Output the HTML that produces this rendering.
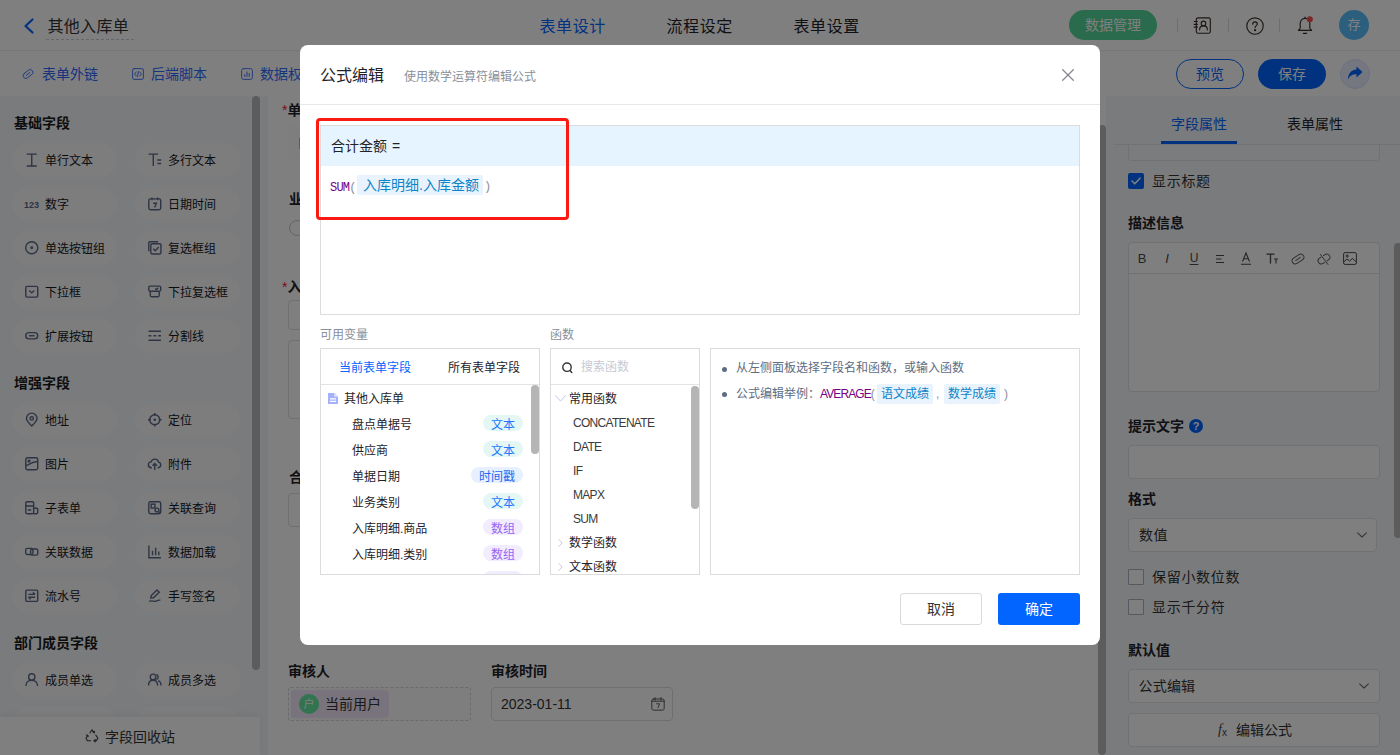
<!DOCTYPE html>
<html lang="zh-CN">
<head>
<meta charset="utf-8">
<title>公式编辑</title>
<style>
*{box-sizing:border-box;margin:0;padding:0}
html,body{width:1400px;height:755px;overflow:hidden;background:#fff}
body{font-family:"Liberation Sans","Noto Sans CJK SC",sans-serif;color:#1f2329;font-size:14px;position:relative}
.a{position:absolute}
.t{position:absolute;white-space:nowrap;height:20px;line-height:20px}
.b{font-weight:bold}
svg{position:absolute;overflow:visible}
.pill{position:absolute;width:105px;height:34px;border-radius:17px;background:#fafbfd}
.pill span{position:absolute;left:33px;top:8px;height:20px;line-height:20px;font-size:12px;color:#15181d;white-space:nowrap}
.pill svg{left:13px;top:10.250px;width:13.500px;height:13.500px;fill:none;stroke:#5c6986;stroke-width:1.25}
.sec{position:absolute;left:14px;font-size:14px;font-weight:bold;height:20px;line-height:20px;color:#1a1a1a}
.inp{position:absolute;border:1px solid #dcdfe6;border-radius:4px;background:#fff}
.lab{position:absolute;font-size:14px;font-weight:bold;height:20px;line-height:20px;color:#1f2329;white-space:nowrap}
.tag{position:absolute;height:16px;line-height:21px;border-radius:8px;font-size:12px;text-align:center;white-space:nowrap}
.it{position:absolute;font-size:12px;height:20px;line-height:20px;white-space:nowrap;color:#1f2329}
</style>
</head>
<body>
<!-- ================= PAGE (under overlay) ================= -->
<div id="page" class="a" style="left:0;top:0;width:1400px;height:755px;background:#fff">

<!-- header -->
<div id="hdr" class="a" style="left:0;top:0;width:1400px;height:51px;background:#fff;border-bottom:1px solid #efefef">
<svg style="left:22.500px;top:17.500px;width:11px;height:16px" viewBox="0 0 11 16"><path d="M9.5 1.5L2.5 8l7 6.5" fill="none" stroke="#0265ff" stroke-width="2.2" stroke-linecap="round" stroke-linejoin="round"/></svg>
<div class="t" style="left:47.500px;top:14.500px;height:24px;line-height:24px;font-size:16px;letter-spacing:.3px;color:#333">其他入库单</div>
<div class="a" style="left:46px;top:39px;width:88px;height:0;border-top:1px dashed #c9cdd4"></div>
<div class="t" style="left:539.5px;top:14.5px;height:24px;line-height:24px;font-size:16px;letter-spacing:.6px;color:#0265ff">表单设计</div>
<div class="t" style="left:666.5px;top:14.5px;height:24px;line-height:24px;font-size:16px;letter-spacing:.6px;color:#1f2329">流程设定</div>
<div class="t" style="left:793.5px;top:14.5px;height:24px;line-height:24px;font-size:16px;letter-spacing:.6px;color:#1f2329">表单设置</div>
<div class="a" style="left:1069px;top:10px;width:88px;height:30px;border-radius:15px;background:#52d698;color:#fff;font-size:14px;line-height:30px;text-align:center">数据管理</div>
<div class="a" style="left:1177px;top:18px;width:1px;height:14px;background:#dcdcdc"></div>
<div class="a" style="left:1228px;top:18px;width:1px;height:14px;background:#dcdcdc"></div>
<div class="a" style="left:1279px;top:18px;width:1px;height:14px;background:#dcdcdc"></div>
<svg style="left:1193px;top:17px;width:19px;height:17px" viewBox="0 0 19 17" fill="none" stroke="#3a2e28" stroke-width="1.150" stroke-linecap="round"><rect x="3.300" y=".8" width="14" height="15.400" rx="1.800"/><path d="M1.200 4.500h3.200M1.200 7.300h3.200M1.200 10.100h3.200"/><circle cx="10.500" cy="6.400" r="2.300"/><path d="M6.600 12.800c0-2.500 1.700-3.900 3.900-3.900s3.900 1.400 3.900 3.900"/></svg>
<svg style="left:1246px;top:16.500px;width:18px;height:18px" viewBox="0 0 18 18" fill="none" stroke="#3a2e28" stroke-width="1.150" stroke-linecap="round"><circle cx="9" cy="9" r="8.200"/><path d="M6.700 7.200c0-1.500 1-2.400 2.300-2.400s2.300.9 2.300 2.100c0 1.600-2.200 1.900-2.200 3.700"/><circle cx="9.100" cy="13.200" r=".55" fill="#3a2e28"/></svg>
<svg style="left:1297px;top:15.500px;width:16px;height:19px" viewBox="0 0 16 19" fill="none" stroke="#3a2e28" stroke-width="1.150" stroke-linecap="round" stroke-linejoin="round"><path d="M3.200 12V7.600C3.200 4.600 5.300 2.300 8 2.300s4.800 2.300 4.800 5.300V12c0 1 .8 1.600 1.800 2.300H1.400C2.400 13.600 3.200 13 3.200 12z"/><path d="M6.300 17.300h3.400M8 1v1.200"/><circle cx="12.800" cy="3.200" r="3" fill="#fa4a4f" stroke="none"/></svg>
<div class="a" style="left:1339px;top:10px;width:30px;height:30px;border-radius:15px;background:#58bdfb;color:#fff;font-size:13px;line-height:30px;text-align:center">存</div>
</div>
<!-- toolbar -->
<div id="tbar" class="a" style="left:0;top:50px;width:1400px;height:46px;background:transparent">
<svg style="left:22px;top:18px;width:12px;height:12px" viewBox="0 0 12 12" fill="none" stroke="#3d74ff" stroke-width=".9" stroke-linecap="round"><g transform="rotate(-38 6 6)"><rect x=".5" y="3.300" width="11" height="5.400" rx="2.700"/><path d="M3.600 6h4.800"/></g></svg>
<div class="t" style="left:42px;top:14px;font-size:14px;color:#2f6bff">表单外链</div>
<svg style="left:132px;top:18px;width:12px;height:12px" viewBox="0 0 12 12" fill="none" stroke="#3d74ff" stroke-width=".95" stroke-linecap="round" stroke-linejoin="round"><rect x=".6" y=".6" width="10.800" height="10.800" rx="1.500"/><path d="M4.300 4L2.500 6l1.800 2M7.700 4l1.800 2-1.800 2M6.600 3.600L5.400 8.400"/></svg>
<div class="t" style="left:151px;top:14px;font-size:14px;color:#2f6bff">后端脚本</div>
<svg style="left:241px;top:18px;width:12px;height:12px" viewBox="0 0 12 12" fill="none" stroke="#3d74ff" stroke-width=".95" stroke-linecap="round"><rect x=".6" y=".6" width="10.800" height="10.800" rx="2"/><path d="M3.800 8.500V6.500M6 8.500V4M8.200 8.500V5.500"/></svg>
<div class="t" style="left:260px;top:14px;font-size:14px;color:#2f6bff">数据权限</div>
<div class="a" style="left:1176px;top:9px;width:68px;height:30px;border-radius:15px;border:1px solid #0265ff;color:#0265ff;font-size:14px;line-height:28px;text-align:center">预览</div>
<div class="a" style="left:1258px;top:9px;width:68px;height:30px;border-radius:15px;background:#0265ff;color:#fff;font-size:14px;line-height:30px;text-align:center">保存</div>
<div class="a" style="left:1340px;top:9px;width:30px;height:30px;border-radius:15px;background:#e8efff;border:1px solid #d5e2ff"></div>
<svg style="left:1347px;top:16px;width:16px;height:15px" viewBox="0 0 16 15"><path d="M9.500 0.500L15.500 6l-6 5.500V8.200C5.500 8.200 2.800 9.500 1 13.500 1 8 4 4 9.500 3.600z" fill="#0265ff"/></svg>
</div>
<!-- left panel -->
<div id="left" class="a" style="left:0;top:96px;width:268px;height:659px;background:#f5f7fa;overflow:hidden">
<div class="sec" style="top:17px">基础字段</div>
<div class="pill" style="left:12px;top:47px"><svg viewBox="0 0 12 12"><path d="M1.500 1h9M1.500 11.500h9M6 1v10.500"/></svg><span>单行文本</span></div>
<div class="pill" style="left:135px;top:47px"><svg viewBox="0 0 12 12"><path d="M.5 1h8.500M4.700 1v10.500M8.300 6.200h3.400M8.300 9.400h3.400"/></svg><span>多行文本</span></div>
<div class="pill" style="left:12px;top:91px"><i style="position:absolute;left:12px;top:8px;height:20px;line-height:20px;font-size:9px;font-weight:bold;font-style:normal;color:#5c6986;letter-spacing:0">123</i><span>数字</span></div>
<div class="pill" style="left:135px;top:91px"><svg viewBox="0 0 12 12"><rect x=".7" y="1.700" width="10.600" height="9.600" rx="1.500"/><path d="M3.500 .5v2.400M8.500 .5v2.400M4.500 5.500h3l-1.600 3.800"/></svg><span>日期时间</span></div>
<div class="pill" style="left:12px;top:135px"><svg viewBox="0 0 12 12"><circle cx="6" cy="6" r="5.400"/><circle cx="6" cy="6" r="1.300" fill="#5c6986" stroke="none"/></svg><span>单选按钮组</span></div>
<div class="pill" style="left:135px;top:135px"><svg viewBox="0 0 12 12"><rect x="2.500" y="2.500" width="9" height="9" rx="1"/><path d="M.7 9V1.500c0-.5.300-.8.800-.8H9M4.700 6.800l1.800 1.800 3-3.300"/></svg><span>复选框组</span></div>
<div class="pill" style="left:12px;top:179px"><svg viewBox="0 0 12 12"><rect x=".7" y="1.200" width="10.600" height="9.600" rx="1"/><path d="M3.800 4.800L6 7l2.200-2.200"/></svg><span>下拉框</span></div>
<div class="pill" style="left:135px;top:179px"><svg viewBox="0 0 12 12"><rect x=".7" y="1" width="10.600" height="4.500" rx="1"/><path d="M2 5.500v3.500c0 1 .5 1.500 1.500 1.500h5c1 0 1.500-.5 1.500-1.500V5.500M6.500 3.200l1 1 1.600-1.700"/></svg><span>下拉复选框</span></div>
<div class="pill" style="left:12px;top:223px"><svg viewBox="0 0 12 12"><rect x=".7" y="3.200" width="10.600" height="5.600" rx="2.800"/><path d="M3.500 6h5"/></svg><span>扩展按钮</span></div>
<div class="pill" style="left:135px;top:223px"><svg viewBox="0 0 12 12"><path d="M.5 2h11M.5 6h2.500M4.800 6h2.500M9 6h2.500M.5 10h11"/></svg><span>分割线</span></div>
<div class="sec" style="top:277px">增强字段</div>
<div class="pill" style="left:12px;top:307px"><svg viewBox="0 0 12 12"><path d="M6 11.500C3 8.500 1.300 6.800 1.300 4.800a4.700 4.700 0 0 1 9.400 0c0 2-1.700 3.700-4.700 6.700z"/><circle cx="6" cy="4.800" r="1.500"/></svg><span>地址</span></div>
<div class="pill" style="left:135px;top:307px"><svg viewBox="0 0 12 12"><circle cx="6" cy="6" r="4.500"/><circle cx="6" cy="6" r="1.200" fill="#5c6986" stroke="none"/><path d="M6 0v2.500M6 9.500V12M0 6h2.500M9.500 6H12"/></svg><span>定位</span></div>
<div class="pill" style="left:12px;top:351px"><svg viewBox="0 0 12 12"><rect x=".7" y=".7" width="10.600" height="10.600" rx="1.500"/><path d="M.7 7.500c3-.5 4.500-3 10.600-3.500"/><circle cx="3.600" cy="3.600" r=".8"/></svg><span>图片</span></div>
<div class="pill" style="left:135px;top:351px"><svg viewBox="0 0 12 12"><path d="M3.500 9.500H3A2.600 2.600 0 0 1 2.800 4.300 3.400 3.400 0 0 1 9.400 4.600 2.500 2.500 0 0 1 9.200 9.500H8.500M6 11.500V6M4 7.800L6 5.800l2 2"/></svg><span>附件</span></div>
<div class="pill" style="left:12px;top:395px"><svg viewBox="0 0 12 12"><rect x=".7" y=".7" width="7" height="10.600" rx="1"/><path d="M.7 4.500h7M7.700 6.500h2.600c.6 0 1 .4 1 1v2.800c0 .6-.4 1-1 1H7.700M2.500 8h3"/></svg><span>子表单</span></div>
<div class="pill" style="left:135px;top:395px"><svg viewBox="0 0 12 12"><rect x=".7" y=".7" width="10.600" height="10.600" rx="1.500"/><rect x="2.800" y="2.800" width="3.400" height="3.400"/><circle cx="8" cy="8" r="1.700"/><path d="M9.300 9.300l1.500 1.500"/></svg><span>关联查询</span></div>
<div class="pill" style="left:12px;top:439px"><svg viewBox="0 0 12 12"><rect x=".6" y="3" width="6.400" height="5.500" rx="1.500"/><rect x="5" y="3.500" width="6.400" height="5.500" rx="1.500"/></svg><span>关联数据</span></div>
<div class="pill" style="left:135px;top:439px"><svg viewBox="0 0 12 12"><path d="M.8 .5v10.800h10.700M4 9V5M6.800 9V2.500M9.600 9V5.800"/></svg><span>数据加载</span></div>
<div class="pill" style="left:12px;top:483px"><svg viewBox="0 0 12 12"><rect x=".7" y="1" width="10.600" height="10" rx="1"/><path d="M3 4.800h6M3 7.300h6M7 3l2 1.800M5 9.100L3 7.300"/></svg><span>流水号</span></div>
<div class="pill" style="left:135px;top:483px"><svg viewBox="0 0 12 12"><path d="M2.500 8l.4-2.200L8 .8l2 2-5.200 5-2.300.2zM1 11c2-1.200 3.500 0 5 0s2.500-1.500 5-1"/></svg><span>手写签名</span></div>
<div class="sec" style="top:537px">部门成员字段</div>
<div class="pill" style="left:12px;top:567px"><svg viewBox="0 0 12 12"><circle cx="6" cy="3.500" r="2.800"/><path d="M.8 11.500c0-3 2.200-5 5.200-5s5.200 2 5.200 5"/></svg><span>成员单选</span></div>
<div class="pill" style="left:135px;top:567px"><svg viewBox="0 0 12 12"><circle cx="4.500" cy="3.500" r="2.500"/><path d="M.5 11c0-2.800 1.700-4.500 4-4.500s4 1.700 4 4.500M7.500 1.200a2.500 2.500 0 0 1 0 4.600M9 6.800c1.600.5 2.600 2 2.600 4.200"/></svg><span>成员多选</span></div>
<div class="pill" style="left:12px;top:611px"></div><div class="pill" style="left:135px;top:611px"></div>
<div class="a" style="left:252px;top:0;width:8px;height:574px;border-radius:4px;background:#b9b9b9"></div>
<div class="a" style="left:0;top:621px;width:260px;height:38px;background:#fff;box-shadow:0 -2px 8px rgba(0,0,0,.06)"><svg style="left:85px;top:12px;width:14px;height:14px" viewBox="0 0 14 14" fill="none" stroke="#3c3c3c" stroke-width="1.100" stroke-linecap="round" stroke-linejoin="round"><path d="M5 3.800L7 .8l2 3M10.800 6l2 3.200-1.400 2.500H9M5.500 11.700H2.400L1 9.200 2.700 6.500"/><path d="M8 2.800l1.200.9.300-1.400M10.300 12.800L9 11.700l1.300-1M1.400 6l1.400.400.300 1.400"/></svg><div class="t" style="left:105px;top:10px;font-size:14px;color:#333">字段回收站</div></div>
</div>
<!-- canvas -->
<div id="canvas" class="a" style="left:268px;top:96px;width:838px;height:659px;background:#fff;overflow:hidden">
<div class="lab" style="left:14px;top:4px"><span style="color:#f5222d;font-weight:normal">*</span>单据编号</div>
<div class="inp" style="left:20px;top:30px;width:380px;height:34px;background:#fdfdfd;border-color:#fafafa"></div><div class="a" style="left:31px;top:42px;width:1px;height:11px;background:#f0a868"></div>
<div class="lab" style="left:21px;top:93px">业务类别</div>
<div class="a" style="left:21px;top:124px;width:16px;height:16px;border-radius:8px;border:1px solid #c4c9d4;background:#fff"></div>
<div class="lab" style="left:14px;top:181px"><span style="color:#f5222d;font-weight:normal">*</span>入库明细</div>
<div class="inp" style="left:20px;top:204px;width:780px;height:30px;border-color:#e0e0e2"></div>
<div class="inp" style="left:20px;top:244px;width:780px;height:79px;border-color:#e0e0e2"></div>
<div class="lab" style="left:21px;top:371px">合计金额</div>
<div class="inp" style="left:20px;top:397px;width:380px;height:34px;border-color:#e0e0e2"></div>
<div class="lab" style="left:20px;top:565px">审核人</div>
<div class="a" style="left:20px;top:591px;width:183px;height:34px;border:1px dashed #d4d7dd;border-radius:3px;background:#fcfcfd"></div>
<div class="a" style="left:23px;top:594px;width:98px;height:28px;border-radius:3px;background:#f1e6f9"></div>
<div class="a" style="left:31px;top:598px;width:20px;height:20px;border-radius:10px;background:#62e89f;color:#fff;font-size:11px;line-height:20px;text-align:center">户</div>
<div class="t" style="left:57px;top:598px;font-size:14px;color:#333">当前用户</div>
<div class="lab" style="left:223px;top:565px">审核时间</div>
<div class="inp" style="left:223px;top:591px;width:182px;height:34px;border-color:#dedede"></div>
<div class="t" style="left:233px;top:598px;font-size:14px;color:#333">2023-01-11</div>
<svg style="left:383px;top:601px;width:14px;height:14px" viewBox="0 0 12 12" fill="none" stroke="#5a5a5a" stroke-width=".85" stroke-linecap="round" stroke-linejoin="round"><rect x=".7" y="1.700" width="10.600" height="9.600" rx="1.500"/><path d="M3.500 .5v2.400M8.500 .5v2.400M.7 3.600h10.600" /><path d="M4.800 5.800h2.600l-1.400 3.400" stroke-width=".8"/></svg>
<div class="a" style="left:830px;top:28.500px;width:8px;height:630.500px;border-radius:4px;background:#b9b9b9"></div>
</div>
<!-- right panel -->
<div id="right" class="a" style="left:1106px;top:96px;width:294px;height:659px;background:#f5f7fa;overflow:hidden">
<div class="t" style="left:65px;top:18px;font-size:14px;color:#0265ff">字段属性</div>
<div class="t" style="left:181px;top:18px;font-size:14px;color:#1f2329">表单属性</div>
<div class="a" style="left:8px;top:48px;width:286px;height:1px;background:#e3e5e9"></div>
<div class="a" style="left:55px;top:45px;width:76px;height:3px;background:#0265ff"></div>
<div class="inp" style="left:22px;top:40px;width:252px;height:25px;border-color:#e1e3e8;background:#f7f8fa;border-top:0;border-radius:0 0 4px 4px;top:49px;height:16px"></div>
<div class="a" style="left:22px;top:77px;width:16px;height:16px;border-radius:2px;background:#0265ff"></div>
<svg style="left:25px;top:81px;width:10px;height:8px" viewBox="0 0 10 8" fill="none" stroke="#fff" stroke-width="1.600" stroke-linecap="round" stroke-linejoin="round"><path d="M1 4l2.800 2.800L9 1.200"/></svg>
<div class="t" style="left:46px;top:75px;font-size:14px;letter-spacing:.7px;color:#333">显示标题</div>
<div class="lab" style="left:22px;top:117px">描述信息</div>
<div class="inp" style="left:22px;top:146px;width:252px;height:150px;border-color:#e1e2e5;background:#fff"></div>
<div class="a" style="left:23px;top:177px;width:250px;height:1px;background:#e1e3e8"></div>
<div class="t" style="left:29px;top:153px;width:14px;text-align:center;font-size:13px;color:#4a4a4a;font-family:'Liberation Sans',sans-serif">B</div><div class="t" style="left:54px;top:153px;width:14px;text-align:center;font-size:13px;font-style:italic;color:#4a4a4a;font-family:'Liberation Sans',sans-serif">I</div><div class="t" style="left:81px;top:152px;width:14px;text-align:center;font-size:12px;color:#4a4a4a;font-family:'Liberation Sans',sans-serif;text-decoration:underline;text-underline-offset:2px">U</div><svg style="left:109px;top:158px;width:10px;height:10px" viewBox="0 0 10 10" fill="none" stroke="#4a4a4a" stroke-width="1"><path d="M1 1.500h8M1 5h5.500M1 8.500h8"/></svg><svg style="left:134px;top:156px;width:12px;height:13px" viewBox="0 0 12 13" fill="none" stroke="#4a4a4a" stroke-width="1.100"><path d="M2.500 9.500L6 1l3.500 8.500M3.700 6.800h4.600M1 12.300h10"/></svg><svg style="left:160px;top:157px;width:13px;height:11px" viewBox="0 0 13 11" fill="none" stroke="#4a4a4a" stroke-width="1.300"><path d="M.5 1.200h8M4.500 1.200v9.300"/><path d="M8 6h4M10 6v4.500" stroke-width="1.100"/></svg><svg style="left:185px;top:155.500px;width:14px;height:14px" viewBox="0 0 14 14" fill="none" stroke="#5a5a5a" stroke-width=".95" stroke-linecap="round"><g transform="rotate(-33 7 7)"><rect x=".6" y="3.800" width="12.800" height="6.400" rx="3.200"/><path d="M4.200 7h5.600"/></g></svg><svg style="left:211px;top:155.500px;width:14px;height:14px" viewBox="0 0 14 14" fill="none" stroke="#5a5a5a" stroke-width=".95" stroke-linecap="round"><g transform="rotate(-33 7 7)"><path d="M5.500 3.800H3.800a3.200 3.200 0 0 0 0 6.400h1.700M8.500 3.800h1.700a3.200 3.200 0 0 1 0 6.400H8.500"/></g><path d="M3.500 2.500l7.500 10"/></svg><svg style="left:237px;top:156px;width:14px;height:13px" viewBox="0 0 14 13" fill="none" stroke="#4a4a4a" stroke-width="1" stroke-linejoin="round"><rect x=".6" y=".6" width="12.800" height="11.800" rx="1.500"/><circle cx="4.200" cy="4" r="1.100"/><path d="M.6 10l3.400-3 2.500 2 3-2.500 3.900 3.500"/></svg>
<div class="lab" style="left:22px;top:320px">提示文字</div>
<div class="a" style="left:83px;top:323px;width:14px;height:14px;border-radius:7px;background:#0265ff;color:#fff;font-size:11px;font-weight:bold;line-height:14px;text-align:center;font-family:'Liberation Sans',sans-serif">?</div>
<div class="inp" style="left:22px;top:349px;width:252px;height:34px;border-color:#e1e2e5;background:#fff"></div>
<div class="lab" style="left:22px;top:393px">格式</div>
<div class="inp" style="left:22px;top:422px;width:249px;height:34px;border-color:#e1e2e5;background:#fff"></div>
<div class="t" style="left:33px;top:429px;font-size:14px;letter-spacing:.4px;color:#333">数值</div>
<svg style="left:251px;top:436px;width:10px;height:6px" viewBox="0 0 10 6" fill="none" stroke="#6a6a6a" stroke-width="1.050" stroke-linecap="round" stroke-linejoin="round"><path d="M.6 .8l4.400 4.200 4.400-4.200"/></svg>
<div class="a" style="left:22px;top:473px;width:16px;height:16px;border-radius:1px;border:1px solid #b0b0c0;background:#fff"></div>
<div class="t" style="left:46px;top:471px;font-size:14px;letter-spacing:.7px;color:#333">保留小数位数</div>
<div class="a" style="left:22px;top:503px;width:16px;height:16px;border-radius:1px;border:1px solid #b0b0c0;background:#fff"></div>
<div class="t" style="left:46px;top:501px;font-size:14px;letter-spacing:.7px;color:#333">显示千分符</div>
<div class="lab" style="left:22px;top:544px">默认值</div>
<div class="inp" style="left:22px;top:573px;width:252px;height:34px;border-color:#e1e2e5;background:#fff"></div>
<div class="t" style="left:32.500px;top:580px;font-size:14px;letter-spacing:.2px;color:#333">公式编辑</div>
<svg style="left:253px;top:587px;width:10px;height:6px" viewBox="0 0 10 6" fill="none" stroke="#6a6a6a" stroke-width="1.050" stroke-linecap="round" stroke-linejoin="round"><path d="M.6 .8l4.400 4.200 4.400-4.200"/></svg>
<div class="inp" style="left:22px;top:617px;width:252px;height:34px;border-color:#e1e2e5;background:#fff"></div>
<div class="t" style="left:112px;top:624px;font-size:14px;color:#444;font-style:italic;font-family:'Liberation Serif',serif">f<span style="font-size:10px;font-style:normal;font-family:'Liberation Sans',sans-serif;position:relative;top:2px">x</span></div>
<div class="t" style="left:130px;top:624px;font-size:14px;color:#333">编辑公式</div>
<div class="a" style="left:288px;top:147px;width:8px;height:295px;border-radius:4px;background:#b9b9b9"></div>
</div>

</div>
<!-- overlay -->
<div id="mask" class="a" style="left:0;top:0;width:1400px;height:755px;background:rgba(0,0,0,0.5)"></div>
<!-- ================= MODAL ================= -->
<div id="modal" class="a" style="left:300px;top:45px;width:800px;height:600px;background:#fff;border-radius:8px;overflow:hidden">
<div class="t" style="left:20px;top:19px;height:24px;line-height:24px;font-size:16px;color:#1f2329">公式编辑</div>
<div class="t" style="left:104px;top:22px;font-size:12px;color:#8a8f99">使用数学运算符编辑公式</div>
<svg style="left:761.500px;top:24px;width:12px;height:12px" viewBox="0 0 12 12" fill="none" stroke="#85878c" stroke-width="1.250" stroke-linecap="round"><path d="M.7 .7l10.600 10.600M11.300 .7L.7 11.300"/></svg>
<div class="a" style="left:0;top:59px;width:800px;height:1px;background:#e8e8e8"></div>
<div class="a" style="left:20px;top:80px;width:760px;height:190px;border:1px solid #dcdcdc"></div>
<div class="a" style="left:21px;top:81px;width:758px;height:40px;background:#e6f4ff"></div>
<div class="t" style="left:31px;top:91px;font-size:14px;word-spacing:1px;color:#1f2329">合计金额 =</div>
<div class="t" style="left:30px;top:132.500px;font-size:12px;letter-spacing:-.8px;color:#770088;font-family:'Liberation Mono',monospace">SUM<span style="color:#8a8f99">(</span></div>
<div class="a" style="left:57px;top:130px;width:126px;height:20px;border-radius:2px;background:#e9f3fd"></div>
<div class="t" style="left:63px;top:130px;font-size:14px;color:#0e84c8">入库明细.入库金额</div>
<div class="t" style="left:184px;top:132px;font-size:12px;color:#8a8f99;font-family:'Liberation Mono',monospace">)</div>
<div class="a" style="left:16px;top:73px;width:253px;height:102px;border:3px solid #fb1a12;border-radius:4px"></div>
<div class="t" style="left:20px;top:280px;font-size:12px;color:#8a8f99">可用变量</div>
<div class="t" style="left:250px;top:280px;font-size:12px;color:#8a8f99">函数</div>
<div class="a" style="left:20px;top:303px;width:220px;height:227px;border:1px solid #dcdcdc;overflow:hidden" id="p1">
<div class="t" style="left:18px;top:9px;font-size:12px;color:#0265ff">当前表单字段</div>
<div class="t" style="left:127px;top:9px;font-size:12px;color:#1f2329">所有表单字段</div>
<div class="a" style="left:0;top:35px;width:218px;height:1px;background:#e3e3e3"></div>
<svg style="left:7px;top:44px;width:10px;height:11px" viewBox="0 0 10 11"><path d="M0 0h6.500L10 3.500V11H0z" fill="#a4b2fd"/><path d="M6.200 0v3.800H10z" fill="#dfe5ff"/><path d="M2 5.800h6M2 8.300h6" stroke="#fff" stroke-width="1.200"/></svg>
<div class="it" style="left:23px;top:40px">其他入库单</div>
<div class="it" style="left:31px;top:66px">盘点单据号</div>
<div class="tag" style="left:162px;top:66px;width:40px;background:#e5f7f5;color:#2277ff">文本</div>
<div class="it" style="left:31px;top:92px">供应商</div>
<div class="tag" style="left:162px;top:92px;width:40px;background:#e5f7f5;color:#2277ff">文本</div>
<div class="it" style="left:31px;top:118px">单据日期</div>
<div class="tag" style="left:150px;top:118px;width:52px;background:#e6f0ff;color:#2468f2">时间戳</div>
<div class="it" style="left:31px;top:144px">业务类别</div>
<div class="tag" style="left:162px;top:144px;width:40px;background:#e5f7f5;color:#2277ff">文本</div>
<div class="it" style="left:31px;top:170px">入库明细.商品</div>
<div class="tag" style="left:162px;top:170px;width:40px;background:#f2ecff;color:#9466f0">数组</div>
<div class="it" style="left:31px;top:196px">入库明细.类别</div>
<div class="tag" style="left:162px;top:196px;width:40px;background:#f2ecff;color:#9466f0">数组</div>
<div class="it" style="left:31px;top:222px">入库明细.数量</div>
<div class="tag" style="left:162px;top:222px;width:40px;background:#f2ecff;color:#9466f0">数组</div>
<div class="a" style="left:209.500px;top:35.500px;width:8.500px;height:69px;border-radius:4px;background:#b5b5b5"></div>
</div>
<div class="a" style="left:250px;top:303px;width:150px;height:227px;border:1px solid #dcdcdc;overflow:hidden" id="p2">
<svg style="left:10.500px;top:12.500px;width:11px;height:12px" viewBox="0 0 11 12" fill="none" stroke="#333" stroke-width="1.400" stroke-linecap="round"><circle cx="5" cy="5.200" r="4.200"/><path d="M8 8.500l1.800 2"/></svg>
<div class="t" style="left:30px;top:8px;font-size:12px;color:#c6cad3">搜索函数</div>
<div class="a" style="left:0;top:35px;width:148px;height:1px;background:#e3e3e3"></div>
<svg style="left:3.500px;top:46px;width:11px;height:7px" viewBox="0 0 11 7" fill="none" stroke="#c3c9e6" stroke-width="1" stroke-linecap="round"><path d="M.5 .6l5 5.500 5-5.500"/></svg>
<div class="it" style="left:18px;top:40px">常用函数</div>
<div class="it" style="left:22px;top:64px;color:#3a3a3a;letter-spacing:-.7px">CONCATENATE</div>
<div class="it" style="left:22px;top:88px;color:#3a3a3a;letter-spacing:-.7px">DATE</div>
<div class="it" style="left:22px;top:112px;color:#3a3a3a;letter-spacing:-.7px">IF</div>
<div class="it" style="left:22px;top:136px;color:#3a3a3a;letter-spacing:-.7px">MAPX</div>
<div class="it" style="left:22px;top:160px;color:#3a3a3a;letter-spacing:-.7px">SUM</div>
<svg style="left:7px;top:190px;width:5px;height:8px" viewBox="0 0 5 8" fill="none" stroke="#cbc6e2" stroke-width="1" stroke-linecap="round"><path d="M.8 .5l3.400 3.500-3.400 3.500"/></svg>
<div class="it" style="left:18px;top:184px">数学函数</div>
<svg style="left:7px;top:214px;width:5px;height:8px" viewBox="0 0 5 8" fill="none" stroke="#cbc6e2" stroke-width="1" stroke-linecap="round"><path d="M.8 .5l3.400 3.500-3.400 3.500"/></svg>
<div class="it" style="left:18px;top:208px">文本函数</div>
<div class="a" style="left:140px;top:37px;width:8px;height:123px;border-radius:4px;background:#b5b5b5"></div>
</div>
<div class="a" style="left:410px;top:303px;width:370px;height:227px;border:1px solid #dcdcdc;overflow:hidden" id="p3">
<div class="a" style="left:11px;top:18px;width:5px;height:5px;border-radius:2.500px;background:#5e6d82"></div>
<div class="t" style="left:25px;top:9px;font-size:12px;color:#5e6d82">从左侧面板选择字段名和函数，或输入函数</div>
<div class="a" style="left:11px;top:43px;width:5px;height:5px;border-radius:2.500px;background:#5e6d82"></div>
<div class="t" style="left:25px;top:35px;font-size:12px;color:#5e6d82">公式编辑举例：<span style="color:#770088;letter-spacing:-.9px">AVERAGE</span><span style="color:#8a8f99">(</span></div>
<div class="a" style="left:166px;top:35px;width:56px;height:20px;border-radius:2px;background:#e9f3fd;color:#0e84c8;font-size:12px;line-height:20px;text-align:center">语文成绩</div>
<div class="t" style="left:225px;top:35px;font-size:12px;color:#8a8f99">,</div>
<div class="a" style="left:233px;top:35px;width:56px;height:20px;border-radius:2px;background:#e9f3fd;color:#0e84c8;font-size:12px;line-height:20px;text-align:center">数学成绩</div>
<div class="t" style="left:293px;top:35px;font-size:12px;color:#8a8f99">)</div>
</div>
<div class="a" style="left:600px;top:548px;width:82px;height:32px;border:1px solid #d9d9d9;border-radius:3px;background:#fff;color:#333;font-size:14px;line-height:30px;text-align:center">取消</div>
<div class="a" style="left:698px;top:548px;width:82px;height:32px;border-radius:3px;background:#0265ff;color:#fff;font-size:14px;line-height:32px;text-align:center">确定</div>
</div>
</body>
</html>
